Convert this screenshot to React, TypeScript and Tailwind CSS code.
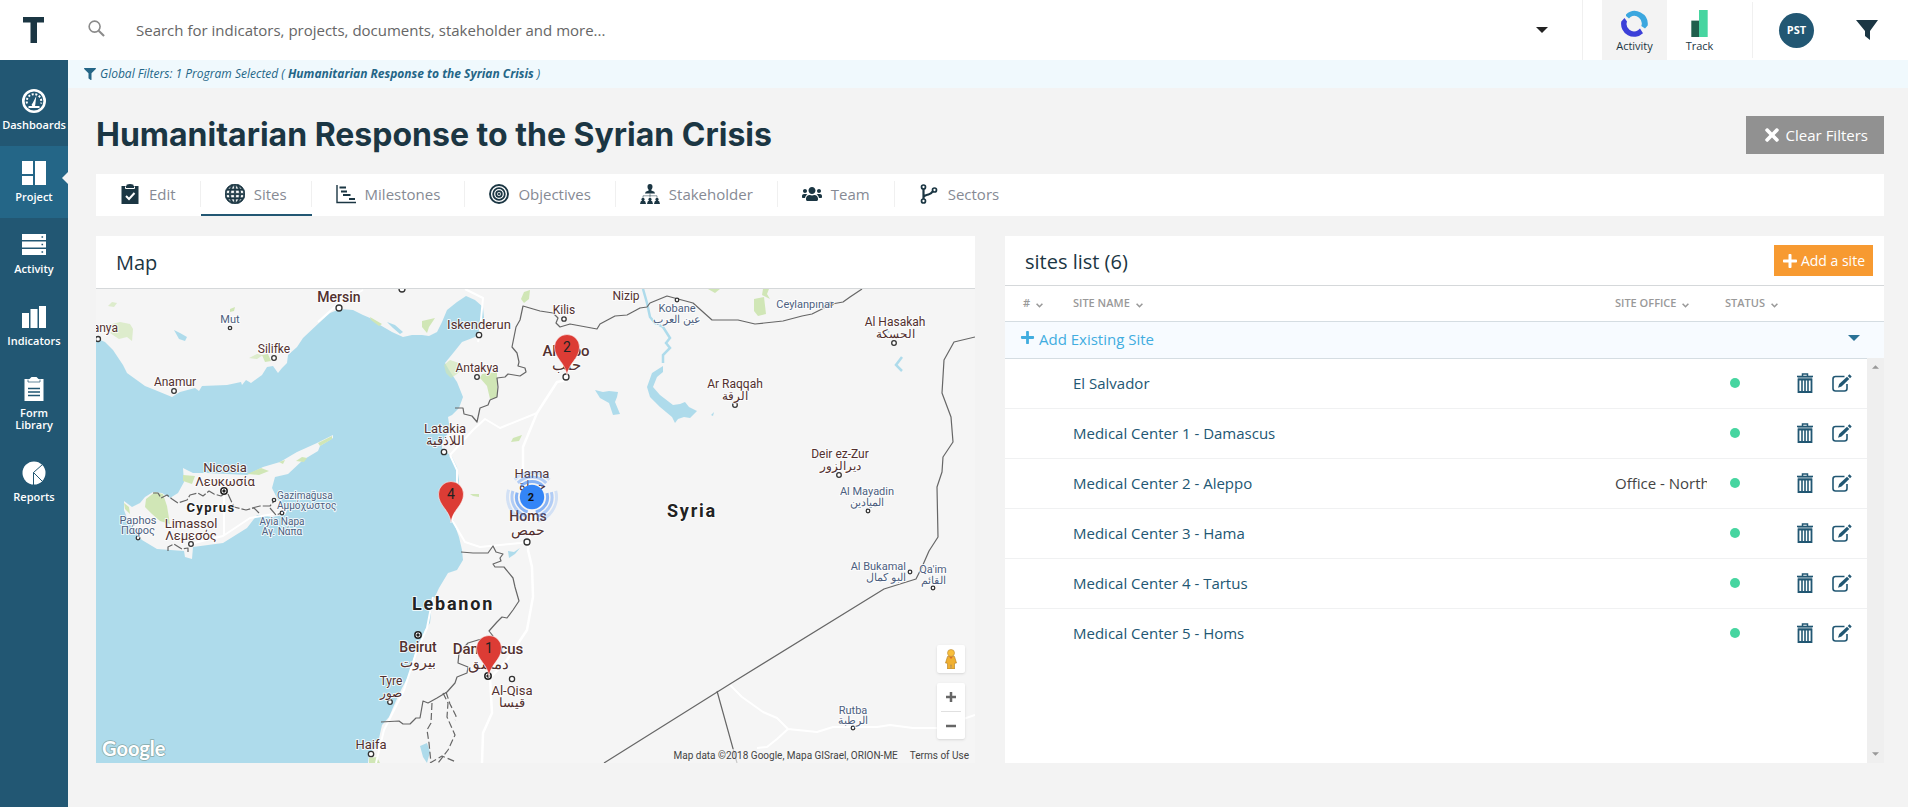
import type { ReactNode } from "react";
import { clsx } from "clsx";
import { FaFilter, FaPlus, FaTimes, FaUsers } from "react-icons/fa";
import { BsGlobe } from "react-icons/bs";

const sidebarItems = [
  { label: "Dashboards", icon: <GaugeIcon /> },
  { label: "Project", icon: <LayoutIcon />, active: true },
  { label: "Activity", icon: <ServerIcon /> },
  { label: "Indicators", icon: <BarsIcon /> },
  { label: "Form Library", icon: <ClipboardIcon /> },
  { label: "Reports", icon: <PieIcon /> },
];

const tabs = [
  { label: "Edit", icon: <ClipboardCheckIcon /> },
  { label: "Sites", icon: <BsGlobe className="size-5" strokeWidth={0.6} />, active: true },
  { label: "Milestones", icon: <GanttIcon /> },
  { label: "Objectives", icon: <TargetIcon /> },
  { label: "Stakeholder", icon: <OrgIcon /> },
  { label: "Team", icon: <FaUsers className="size-5" /> },
  { label: "Sectors", icon: <BranchIcon /> },
];

const sites = [
  { name: "El Salvador", office: "" },
  { name: "Medical Center 1 - Damascus", office: "" },
  { name: "Medical Center 2 - Aleppo", office: "Office - North" },
  { name: "Medical Center 3 - Hama", office: "" },
  { name: "Medical Center 4 - Tartus", office: "" },
  { name: "Medical Center 5 - Homs", office: "" },
];

type Place = {
  name: string;
  x: number;
  y: number;
  size?: number;
  bold?: boolean;
  town?: boolean;
  local?: string;
  localY?: number;
  anchor?: "start" | "middle" | "end";
};

const places: Place[] = [
  { name: "Mersin", x: 339, y: 302, size: 14, bold: true },
  { name: "Alanya", x: 118, y: 332, anchor: "end" },
  { name: "Mut", x: 230, y: 323, size: 11, town: true },
  { name: "Silifke", x: 274, y: 353 },
  { name: "Anamur", x: 175, y: 386 },
  { name: "Iskenderun", x: 479, y: 329, size: 13 },
  { name: "Antakya", x: 477, y: 372 },
  { name: "Kilis", x: 564, y: 314 },
  { name: "Nizip", x: 626, y: 300 },
  { name: "Aleppo", x: 566, y: 356, size: 15, bold: true, local: "حلب", localY: 370 },
  { name: "Latakia", x: 445, y: 433, size: 13, local: "اللاذقية", localY: 445 },
  { name: "Hama", x: 532, y: 478, size: 13, local: "حماة", localY: 490 },
  { name: "Homs", x: 528, y: 521, size: 14, bold: true, local: "حمص", localY: 535 },
  { name: "Beirut", x: 418, y: 652, size: 14, bold: true, local: "بيروت", localY: 667 },
  { name: "Tyre", x: 391, y: 685, local: "صور", localY: 697 },
  { name: "Damascus", x: 488, y: 654, size: 15, bold: true, local: "دمشق", localY: 669 },
  { name: "Al-Qisa", x: 512, y: 695, size: 13, local: "قيسا", localY: 707 },
  { name: "Haifa", x: 371, y: 749, size: 13 },
  { name: "Nicosia", x: 225, y: 472, size: 13, local: "Λευκωσία", localY: 486 },
  { name: "Limassol", x: 191, y: 528, size: 13, local: "Λεμεσός", localY: 540 },
  { name: "Paphos", x: 138, y: 524, size: 11, town: true, local: "Πάφος", localY: 534 },
  { name: "Gazimağusa", x: 277, y: 499, size: 10, town: true, local: "Αμμόχωστος", localY: 509, anchor: "start" },
  { name: "Ayia Napa", x: 282, y: 525, size: 10, town: true, local: "Αγ. Νάπα", localY: 535 },
  { name: "Kobane", x: 677, y: 312, size: 11, town: true, local: "عين العرب", localY: 323 },
  { name: "Ceylanpınar", x: 805, y: 308, size: 11, town: true },
  { name: "Al Hasakah", x: 895, y: 326, local: "الحسكة", localY: 338 },
  { name: "Ar Raqqah", x: 735, y: 388, local: "الرقة", localY: 400 },
  { name: "Deir ez-Zur", x: 840, y: 458, local: "ديرالزور", localY: 470 },
  { name: "Al Mayadin", x: 867, y: 495, size: 11, town: true, local: "الميادين", localY: 506 },
  { name: "Al Bukamal", x: 906, y: 570, size: 11, town: true, local: "البو كمال", localY: 581, anchor: "end" },
  { name: "Qa'im", x: 933, y: 573, size: 11, town: true, local: "القائم", localY: 584 },
  { name: "Rutba", x: 853, y: 714, size: 11, town: true, local: "الرطبة", localY: 724 },
];

const countries = [
  { name: "Cyprus", x: 211, y: 512, size: 13 },
  { name: "Lebanon", x: 453, y: 610, size: 18 },
  { name: "Syria", x: 692, y: 517, size: 18 },
];

// [x, y, radius]
const dots = [
  [339, 308, 3], [98, 339, 2.5], [230, 328, 1.7], [274, 358, 2.3], [174, 391, 2.3],
  [402, 289, 3], [479, 335, 2.7], [477, 377, 2.3], [564, 319, 2.2], [566, 377, 3],
  [444, 452, 2.7], [527, 542, 3], [390, 702, 2.3], [512, 679, 2.6], [371, 754, 2.7],
  [191, 544, 2.3], [138, 538, 1.8], [274, 500, 1.7], [282, 513, 1.8], [677, 300, 1.8],
  [831, 304, 1.8], [894, 343, 2.3], [735, 405, 2.3], [839, 475, 2.3], [868, 511, 1.8],
  [910, 572, 1.8], [933, 588, 1.8], [853, 728, 1.8],
];

const capitals = [[224, 491], [418, 635], [488, 676]];

const pins = [
  { count: 2, x: 567, y: 347 },
  { count: 4, x: 451, y: 494 },
  { count: 1, x: 489, y: 648 },
];

export default function App() {
  return (
    <div className="flex min-h-screen flex-col bg-[#f3f3f3] font-['Open_Sans','Noto_Sans',sans-serif] text-[#1b3643]">
      <Header />
      <div className="flex flex-1">
        <Sidebar />
        <div className="flex min-w-0 flex-1 flex-col">
          <div className="flex h-7 items-center gap-1 bg-[#f0f9fd] pl-4 text-xs text-[#246687] italic">
            <FaFilter className="size-3" />
            <p>
              Global Filters: 1 Program Selected ( <b>Humanitarian Response to the Syrian Crisis</b> )
            </p>
          </div>
          <main className="px-7 pr-6 pb-11">
            <div className="flex h-[86px] items-center justify-between pt-2">
              <h1 className="font-['Inter',sans-serif] text-[32px] leading-10 font-bold">
                Humanitarian Response to the Syrian Crisis
              </h1>
              <button className="flex h-[38px] items-center gap-1 bg-[#919191] px-4 text-[15px] text-white">
                <FaTimes className="size-5" />
                Clear Filters
              </button>
            </div>
            <TabBar />
            <div className="mt-5 grid grid-cols-2 gap-[30px]">
              <MapPanel />
              <SitesPanel />
            </div>
          </main>
        </div>
      </div>
    </div>
  );
}

function Header() {
  return (
    <header className="flex h-15 items-center bg-white">
      <a href="#" aria-label="Home" className="flex w-[68px] justify-center">
        <svg viewBox="0 0 22 26" className="h-[26px] w-[22px]" fill="#1b3643">
          <path d="M0 0h21v5.500H14V26H7.500V5.500H0z" />
        </svg>
      </a>
      <label className="flex flex-1 items-center">
        <svg viewBox="0 0 18 18" className="mb-1 ml-5 size-[17px]" fill="none" stroke="#8b8b8b" strokeWidth="1.700">
          <circle cx="7" cy="7" r="5.800" />
          <path d="M11.300 11.300L17 17" strokeWidth="2.200" />
        </svg>
        <input
          type="text"
          aria-label="Search"
          placeholder="Search for indicators, projects, documents, stakeholder and more..."
          className="ml-[31px] h-10 min-w-0 flex-1 text-[15px] outline-none placeholder:text-[#666]"
        />
      </label>
      <button aria-label="Search options" className="mr-[34px]">
        <Caret className="h-1.5 w-3 text-[#222]" />
      </button>
      <div className="h-full border-l border-[#f0f0f0]" />
      <nav className="ml-[19px] flex h-full text-[11px] leading-3">
        <a href="#" className="flex w-[65px] flex-col items-center gap-[3px] bg-[#f3f3f3] pt-2.5">
          <svg viewBox="0 0 27 27" className="size-[27px]">
            <path d="M5 4.500A13 13 0 0 1 26.700 15.500L24 18.500 20.300 16A7.500 7.500 0 0 0 9.500 7L8 8.500 5 6z" fill="#3ba7df" />
            <path d="M22 23.300A13 13 0 0 1 .3 11.500L3.500 8 6 11.500A7.500 7.500 0 0 0 17 20.300L19 18.500z" fill="#3c40d8" />
          </svg>
          Activity
        </a>
        <a href="#" className="flex w-[65px] flex-col items-center gap-[3px] pt-2.5">
          <svg viewBox="0 0 17 28" className="h-[27px] w-[17px]">
            <path d="M0 11h8v17H0z" fill="#1f5f4c" />
            <path d="M8 0h9v28H8z" fill="#46d5a0" />
          </svg>
          Track
        </a>
      </nav>
      <div className="ml-5 h-14 border-l border-[#f0f0f0]" />
      <button className="ml-[26px] size-[35px] rounded-full bg-[#225773] text-[11px] font-bold text-white">PST</button>
      <button aria-label="Filters" className="mr-[30px] ml-[42px]">
        <svg viewBox="0 0 22 20" className="h-5 w-[22px]" fill="#1b3643">
          <path d="M0 0h22l-8 11v9l-5-4v-5z" />
        </svg>
      </button>
    </header>
  );
}

function Sidebar() {
  return (
    <nav className="w-[68px] shrink-0 bg-[#225773] pt-3.5">
      {sidebarItems.map((item) => (
        <a
          key={item.label}
          href="#"
          className={clsx(
            "relative flex flex-col items-center gap-1.5 py-[15px] text-center text-[11px] leading-3 font-semibold text-white",
            item.active && "bg-[#246687]",
          )}
        >
          {item.icon}
          <span className="px-2">{item.label}</span>
          {item.active && (
            <svg viewBox="0 0 6 12" className="absolute top-[26px] right-0 h-3 w-1.5" fill="#f3f3f3">
              <path d="M6 0v12L0 6z" />
            </svg>
          )}
        </a>
      ))}
    </nav>
  );
}

function TabBar() {
  return (
    <nav className="flex h-[42px] bg-white text-[#1b3643]">
      {tabs.map((tab) => (
        <a
          key={tab.label}
          href="#"
          className={clsx("group flex border-b-2", tab.active ? "border-[#225773]" : "border-white")}
        >
          <span className="my-auto flex h-[26px] items-center gap-[9px] border-r border-[#f0f0f0] px-6 group-last:border-0">
            {tab.icon}
            <span className="text-[15px] text-[#868a94]">{tab.label}</span>
          </span>
        </a>
      ))}
    </nav>
  );
}

function MapPanel() {
  return (
    <section className="bg-white">
      <h2 className="flex h-[53px] items-center border-b border-[#d5d8da] px-5 pt-0.5 text-xl">Map</h2>
      <div className="relative h-[474px] overflow-hidden">
        <RegionMap />
        <div className="absolute right-2.5 bottom-6 flex flex-col gap-2.5">
          <button aria-label="Street View" className="flex size-7 items-center justify-center rounded-xs bg-white shadow">
            <PegmanIcon />
          </button>
          <div className="flex flex-col items-center rounded-xs bg-white shadow">
            <button aria-label="Zoom in" className="flex size-7 items-center justify-center">
              <svg viewBox="0 0 10 10" className="size-2.5" stroke="#666" strokeWidth="2.500">
                <path d="M5 0v10M0 5h10" />
              </svg>
            </button>
            <div className="h-px w-5 bg-[#e0e0e0]" />
            <button aria-label="Zoom out" className="flex h-[27px] w-7 items-center justify-center">
              <svg viewBox="0 0 10 10" className="size-2.5" stroke="#666" strokeWidth="2.500">
                <path d="M0 5h10" />
              </svg>
            </button>
          </div>
        </div>
        <div className="absolute right-0 bottom-0 flex gap-3 bg-[#f5f5f5]/70 px-1.5 font-['Roboto',sans-serif] text-[10px] leading-[14px] text-[#444]">
          <span>Map data ©2018 Google, Mapa GISrael, ORION-ME</span>
          <a href="#">Terms of Use</a>
        </div>
      </div>
    </section>
  );
}

function SitesPanel() {
  return (
    <section className="relative bg-white">
      <div className="flex h-[50px] items-center justify-between border-b border-[#d5d8da] pr-[11px] pl-5">
        <h2 className="pt-0.5 text-xl">sites list (6)</h2>
        <button className="flex h-[31px] items-center gap-[3px] bg-[#f79a31] px-2 text-sm text-white">
          <FaPlus className="size-4" />
          Add a site
        </button>
      </div>
      <table className="w-full table-fixed border-collapse text-left text-[15px]">
        <colgroup>
          <col className="w-[68px]" />
          <col />
          <col className="w-[110px]" />
          <col className="w-[60px]" />
          <col className="w-[99px]" />
        </colgroup>
        <thead>
          <tr className="h-[35px] border-b border-[#d5dde2] text-[11px] text-[#999]">
            <SortHeader className="pl-[18px]">#</SortHeader>
            <SortHeader>SITE NAME</SortHeader>
            <SortHeader>SITE OFFICE</SortHeader>
            <SortHeader>STATUS</SortHeader>
            <th aria-label="Actions" />
          </tr>
          <tr className="h-[37px] border-b border-[#d5dde2] bg-[#f7fbff]">
            <td colSpan={5} className="p-0">
              <button className="flex w-full items-center pr-6 pl-[15px] text-[#41addf]">
                <FaPlus className="mr-1 mb-1 size-[15px]" />
                Add Existing Site
                <Caret className="mr-0 mb-1 ml-auto h-1.5 w-3 text-[#2a7296]" />
              </button>
            </td>
          </tr>
        </thead>
        <tbody>
          {sites.map((site) => (
            <tr key={site.name} className="h-[50px] border-b border-[#f0f1f2] last:border-0">
              <td />
              <td className="p-0 text-[#225773]">
                <a href="#">{site.name}</a>
              </td>
              <td className="p-0">
                <div className="w-[92px] overflow-hidden whitespace-nowrap text-[#444]">{site.office}</div>
              </td>
              <td className="p-0">
                <div className="ml-[5px] size-2.5 rounded-full bg-[#46d5a0]" />
              </td>
              <td className="p-0">
                <div className="flex items-center gap-[19px] pl-3 text-[#225773]">
                  <button aria-label={`Delete ${site.name}`}>
                    <TrashIcon />
                  </button>
                  <button aria-label={`Edit ${site.name}`}>
                    <EditIcon />
                  </button>
                </div>
              </td>
            </tr>
          ))}
        </tbody>
      </table>
      {/* scroll track over the right edge of the rows */}
      <div className="absolute top-[122px] right-0 bottom-0 flex w-[17px] flex-col items-center justify-between bg-[#efefef] py-[7px] text-[#999]">
        <Caret className="h-1 w-[7px] rotate-180" />
        <Caret className="h-1 w-[7px]" />
      </div>
    </section>
  );
}

function SortHeader({ children, className }: { children: ReactNode; className?: string }) {
  return (
    <th className={clsx("p-0 font-semibold whitespace-nowrap", className)}>
      <button className="flex items-center gap-1.5">
        {children}
        <svg viewBox="0 0 7 5" className="mt-1 h-[5px] w-[7px]" fill="none" stroke="currentColor" strokeWidth="1.600">
          <path d="M.6.800l2.900 2.900L6.400.8" />
        </svg>
      </button>
    </th>
  );
}

function RegionMap() {
  return (
    <svg
      viewBox="96 289 879 474"
      preserveAspectRatio="xMidYMid slice"
      className="h-full w-full bg-[#f5f5f5] font-['Roboto','Noto_Sans',sans-serif]"
    >
      {/* sea */}
      <path
        fill="#aedbeb"
        d="M96 338l9 4 8 8 10 15 4 8 18 13 10 4 17 7 8-5 15-4 4 3 3-5 25-1 14-3 1 3 4-5 5 3 11-8 5-8 6-1 5 7 4-5 5-5 1-8 9-8 6-9 17-16 10-9 10-4 13 1 10 5 7 3 10 7 12 7 11 5 9-2 10 0 7 1 8-4 5-10 5-12 10-8 9-6 9 4 8 7 1 11-4 12-5 7-13 5-8 10-9 11 4 7 8 12 6 15-4 11-7 7-4 2 2 13-8 12 0 6 10 9 5 10 2 13-2 14-6 19 3 10 5 14 3 13 1 10-6 10-9 3-9 15-7 15-2 20-5 7-5 15-5 8-5 20-8 15-7 15-6 14-7 8-5 22-8 6-1 10H96z"
      />
      {/* Cyprus */}
      <path
        fill="#f5f5f5"
        d="M124 501l8 6 8-4 5-6 8-5 9 1 8 5 8-5 6-11-1-14 10 5h14l40 2 16-8 17-5 17-10 20-9 16-8v3l-13 8-2 5-15 9-15 14-13 3-3 11 6 12 9 10-2 5-13 2-15-2-10 13-24 15-30 4-1 12-7-2-1-6-27-2-15-9-9-10-6-12-3-8z"
      />
      {/* parks */}
      <g fill="#d0e6b6">
        <path d="M155 492l8 2 4 12 3 18-10-3-8-7-7-7 1-8zM183 475l12 1-3 8-9-3zM247 474l14-6 8 3-10 4zM318 443l14-7v3l-12 7zM296 461l6-4 5 1-3 4zM279 462l6-2-2 4zM124 503l5 4 1 7-5-5zM422 321l13-3-6 9-2 6-5-6zM370 317l12 7-3 2-8-6zM524 292l6-2-1 9-5 4-3-4zM482 374l15-2v26l-7 1-3-13-7-8zM513 438l9-3-3 6-8 1zM470 494h9v3l-6-1zM708 289h12l-5 4zM754 299l10-2 2 17-8 2-4-5zM763 289h6l-2 5 3 5-8-4zM369 758l8-1 3 6h-11zM230 309l5-2-1 4-4 1zM262 355l6-1 3 7-6 1z" />
        <path d="M108 306l4-4 5 1-3 4zM108 325l12-3 10 2 3 5-1 12-5-4-8 2-9-6 3-3zM249 358l8-4 6 1-6 4zM444 365l6-5 9 3 3 6-5 5-6 4-5-5z" opacity=".650" />
      </g>
      {/* lakes and rivers */}
      <g fill="#aedbeb">
        <path d="M663 366v6l-6 5-4 10 7 8 13 10 7-1 5-2 4 5 8 4-7 7-6-1-6 2-3 4-3-6-12-10-10-10-3-10 5-14zM595 390l8 2 6-1 9 1-1 5-2 5 5 12-7 1-4-12-9-5zM174 330l6 3 7 4-2 4-6-2zM387 322l8 3 8 7-3 2-7-6zM420 746l7-3 3 9-3 11-4-6zM508 551l6 1 6-4-5 6-6 4zM711 415l3-3-1 4zM887 329l3 3-2 1z" />
        <path d="M643 289l4 14 3 14 5 6 8 4 7 11-4 5 4 5-7 7v8M902 357l-6 8 6 6" fill="none" stroke="#aedbeb" strokeWidth="2.500" />
      </g>
      {/* roads */}
      <g fill="none" stroke="#fff" strokeWidth="2.500" strokeLinejoin="round">
        <path d="M567 380l-10 2-20 31-14 34v25M530 533l-2 17 4 17 1 30-6 33-20 30-17 18 2 35-9 20-1 30" />
        <path d="M450 455l7 15v23l-5 27 13 22 15 5 40-4 7-1M450 455l23-25 12-11 15 9 37-15M465 289l18 9-3 32-2 12M318 322l20-18 25-14M433 597l-6 31-10 22-13 40-20 40-8 33" strokeWidth="2" />
        <path d="M730 685l12 12 21 15 14 6 11 11 29 3 16-5h44l13-2 23 3h24l38-13M788 729l-11 10-10 8-10 1M224 496v40M190 544l33-8 27-18 36-6" strokeWidth="2" />
      </g>
      {/* borders */}
      <g fill="none" stroke="#666" strokeWidth="1.200" strokeLinejoin="round">
        <path d="M455 408h8l1 6 8 2 5 6 3-14 8-3 2-5 7-3 1-10-1-9 8-1 3-3 12 2 6-4-1-4-7-2 1-4-2-9-5-6 4-20 4-7 3-14 17 5 13 2 5 5-2 5 4 4 10-3 27 5 3-5 15-8 12-1 13-7 7-1 3-4 17-7 26 7 19 17h26l17 4 28-3 19-5 10-2 20-10 11-2 7-5 12-8" />
        <path d="M975 337l-21 5-10 18-2 33 9 24 2 25-10 15-1 15-5 15 1 50-9 14-7 16-6 12-32 10-154 95-126 79M717 691l20 72" />
        <path d="M461 552l12 1h15l5-7 3 6 7 2-3 4 1 3-8 3 2 3h9l9 11 2 9 4 14-6 9-6 8-5-1-5 5-8 9 4 5-15 4-10 3-9 10-1 10 10 4-1 6-10 4-2 6-8 9-10 6-9 5-5-2-3 17h-4l-6 6h-7l-4-3-18 1" />
        <path d="M432 703l-1 20-4 7 2 13 2 20M443 693l5 10-1 14 8 18-7 15-10 13M446 692l4 12 6 12-1 4M430 763l12-7 14 6" strokeDasharray="7 3" />
        <path d="M153 493h5l3 5 6-3 5 4 6 4 9-3 3-5 8-2 5 3 6-5 5 3 7 2 3-2M228 494l6 13 12 3 8-2 6 6M252 508l8-2h10l5-6M270 508l6 7 6-2M168 551v-4l6-3 8 5 6-1v4" strokeDasharray="9 2" />
      </g>
      <g fill="#fff" stroke="#333" strokeWidth="1.300">
        {dots.map(([x, y, r]) => (
          <circle key={`${x}-${y}`} cx={x} cy={y} r={r} />
        ))}
      </g>
      {capitals.map(([x, y]) => (
        <g key={x} stroke="#222" fill="#fff">
          <circle cx={x} cy={y} r="3.200" strokeWidth="1.500" />
          <circle cx={x} cy={y} r="1.200" fill="#222" />
        </g>
      ))}
      <g stroke="#fff" strokeOpacity=".8" strokeWidth="2" paintOrder="stroke" strokeLinejoin="round">
        {places.map((p) => (
          <g key={p.name} textAnchor={p.anchor ?? "middle"} fontSize={p.size ?? 12} fill={p.town ? "#4d5f80" : "#52302f"}>
            <text x={p.x} y={p.y} fontWeight={p.bold ? 500 : 400}>
              {p.name}
            </text>
            {p.local && (
              <text x={p.x} y={p.localY}>
                {p.local}
              </text>
            )}
          </g>
        ))}
        {countries.map((c) => (
          <text key={c.name} x={c.x} y={c.y} fontSize={c.size} textAnchor="middle" fontWeight="700" fill="#222" className="tracking-widest">
            {c.name}
          </text>
        ))}
      </g>
      {/* cluster marker */}
      <g fill="none" stroke="#4b8ff5" strokeWidth="3" transform="rotate(-135 532 497)">
        <circle cx="532" cy="497" r="15.500" strokeDasharray="24.300 8.100" opacity=".65" />
        <circle cx="532" cy="497" r="20" strokeDasharray="31.400 10.500" opacity=".4" />
        <circle cx="532" cy="497" r="24.500" strokeDasharray="38.500 12.800" opacity=".2" />
      </g>
      <circle cx="532" cy="497" r="12.200" fill="#3385f7" />
      <text x="531" y="501" fontSize="11" fontWeight="700" textAnchor="middle" fill="#111">
        2
      </text>
      {pins.map((pin) => (
        <g key={pin.count} transform={`translate(${pin.x} ${pin.y})`}>
          <path
            d="M0 29C-1 16-12.500 12-12.500 0A12.500 12.500 0 0 1 12.500 0C12.500 12 1 16 0 29z"
            fill="#dc3c35"
            stroke="#fff"
            strokeOpacity=".7"
            strokeWidth=".8"
          />
          <text y="5" fontSize="14" textAnchor="middle" fill="#222">
            {pin.count}
          </text>
        </g>
      ))}
      <text x="102" y="756" fontSize="20" fontWeight="700" fill="#fff" stroke="#8aa" strokeWidth="1.500" paintOrder="stroke" className="font-['Lato',sans-serif]">
        Google
      </text>
    </svg>
  );
}

function Caret({ className }: { className?: string }) {
  return (
    <svg viewBox="0 0 12 6" className={className} fill="currentColor">
      <path d="M0 0h12L6 6z" />
    </svg>
  );
}

function GaugeIcon() {
  return (
    <svg viewBox="0 0 24 24" className="size-6" fill="none" stroke="#fff">
      <circle cx="12" cy="12" r="10.700" strokeWidth="2.600" />
      <path d="M5 14.500a7.300 7.300 0 1 1 14 0" strokeWidth="2" strokeDasharray="2 1.700" />
      <path d="M6.500 18h11" strokeWidth="2" />
      <path d="M14.300 7l-1 8.500a1.800 1.800 0 1 1-2.700-1.300z" fill="#fff" stroke="none" />
    </svg>
  );
}

function LayoutIcon() {
  return (
    <svg viewBox="0 0 24 24" className="size-6" fill="#fff">
      <path d="M0 0h11v13H0zM0 15h11v9H0zM13 0h11v24H13z" />
    </svg>
  );
}

function ServerIcon() {
  return (
    <svg viewBox="0 0 24 24" className="size-6" fill="#fff">
      <path fillRule="evenodd" d="M0 1h24v6H0zM19.500 3.200v1.600h1.600V3.200zM0 8.500h24v6H0zM19.500 10.700v1.600h1.600v-1.600zM0 16h24v6H0zM19.500 18.200v1.600h1.600v-1.600z" />
    </svg>
  );
}

function BarsIcon() {
  return (
    <svg viewBox="0 0 24 24" className="size-6" fill="#fff">
      <path d="M0 8h7v15H0zM8.500 4h7v19h-7zM17 1h7v22h-7z" />
    </svg>
  );
}

function ClipboardIcon() {
  return (
    <svg viewBox="0 0 24 24" className="size-6">
      <path d="M2.500 2h5l2-2h5l2 2h5v22h-19z" fill="#fff" />
      <path d="M6 11.500h12M6 15h12M6 18.500h12" stroke="#225773" strokeWidth="1.300" />
      <path d="M6 2.500v2.500h12V2.500" stroke="#225773" strokeWidth=".7" fill="none" />
    </svg>
  );
}

function PieIcon() {
  return (
    <svg viewBox="0 0 24 24" className="size-6">
      <circle cx="12" cy="12" r="11.500" fill="#fff" />
      <path d="M20.500 3.500L11.500 11.500 20.500 20.500M11.500 11.500V24" stroke="#225773" strokeWidth="1" fill="none" />
    </svg>
  );
}

function ClipboardCheckIcon() {
  return (
    <svg viewBox="0 0 20 20" className="size-5">
      <path d="M1.500 2h5V.800Q10-.8 13.500.8V2h5v18h-17z" fill="currentColor" />
      <path d="M5.500 2.500v2h9v-2" stroke="#fff" strokeWidth="1" fill="none" />
      <path d="M6 12l3 3 5.500-6" stroke="#fff" strokeWidth="2" fill="none" />
    </svg>
  );
}

function GanttIcon() {
  return (
    <svg viewBox="0 0 20 20" className="size-5" fill="none" stroke="currentColor">
      <path d="M1 1v17.500h19" strokeWidth="1.400" />
      <path d="M3.500 3.500H10M5 7.500h6M7 11h7.500M13 15h6" strokeWidth="2" />
    </svg>
  );
}

function TargetIcon() {
  return (
    <svg viewBox="0 0 20 20" className="size-5" fill="none" stroke="currentColor">
      <circle cx="10" cy="10" r="9" strokeWidth="1.900" />
      <circle cx="10" cy="10" r="5.800" strokeWidth="1.800" />
      <circle cx="10" cy="10" r="2.800" strokeWidth="1.800" />
      <circle cx="10" cy="10" r=".8" fill="currentColor" />
    </svg>
  );
}

function OrgIcon() {
  return (
    <svg viewBox="0 0 20 20" className="size-5" fill="currentColor">
      <path d="M10 0c1.800 0 2.600 1.200 2.500 2.800 0 1.400-.6 2.300-1.200 2.900v.8l3 1.200.7 1.800H5l.7-1.800 3-1.200v-.8C8 5.100 7.500 4.200 7.500 2.800 7.400 1.200 8.200 0 10 0z" />
      <path d="M3 13.800v-2h14v2M10 9.500v4" fill="none" stroke="currentColor" strokeWidth=".5" />
      <path d="M0 20l.8-2.800 1.200-.5a1.600 1.600 0 1 1 2 0l1.200.5L6 20zM7 20l.8-2.800 1.200-.5a1.600 1.600 0 1 1 2 0l1.200.5L13 20zM14 20l.8-2.800 1.200-.5a1.600 1.600 0 1 1 2 0l1.200.5L20 20z" />
    </svg>
  );
}

function BranchIcon() {
  return (
    <svg viewBox="0 0 20 20" className="size-5" fill="none" stroke="currentColor" strokeWidth="1.700">
      <circle cx="4.500" cy="3" r="2" />
      <circle cx="4.500" cy="17" r="2" />
      <circle cx="15.500" cy="6" r="2" />
      <path d="M4.500 5v10M4.500 13c1-2 3-2 5-2.500s3-1 4-3" strokeWidth="2.200" />
    </svg>
  );
}

function TrashIcon() {
  return (
    <svg viewBox="0 0 16 20" className="h-5 w-4" fill="none" stroke="currentColor">
      <path d="M5.500 3V1h5v2" strokeWidth="1.500" />
      <path d="M0 3.500h16" strokeWidth="1.600" />
      <path d="M1 5h14" strokeWidth="1.500" opacity=".6" />
      <path d="M1.500 6.500h13V19h-13z" strokeWidth="1.800" />
      <path d="M5 6v13M8 6v13M11 6v13" strokeWidth="1.600" />
    </svg>
  );
}

function EditIcon() {
  return (
    <svg viewBox="0 0 20 18" className="h-[18px] w-5" fill="none" stroke="currentColor">
      <path d="M12.500 2.500H3.500Q1 2.500 1 5v9.500Q1 17 3.500 17h9q2.500 0 2.500-2.500V10" strokeWidth="1.600" />
      <path d="M6 13.700l1.200-3.700L15 2.700l2.300 2.300-7.800 7.500z" fill="currentColor" stroke="none" />
      <path d="M15.800 1.900L17.400.3l2.300 2.200-1.600 1.700z" fill="currentColor" stroke="none" />
    </svg>
  );
}

function PegmanIcon() {
  return (
    <svg viewBox="0 0 12 20" className="h-5 w-3">
      <path d="M2.500 7.500h7l2 6.500-2 .3V20h-3v-4h-1v4h-3v-5.700L.5 14z" fill="#f0b032" stroke="#b07a1b" strokeWidth=".6" />
      <path d="M4 7.500h4L6 10z" fill="#dd6b26" />
      <circle cx="6" cy="4" r="3.500" fill="#f9bf3a" stroke="#b98a3a" strokeWidth=".6" />
    </svg>
  );
}
